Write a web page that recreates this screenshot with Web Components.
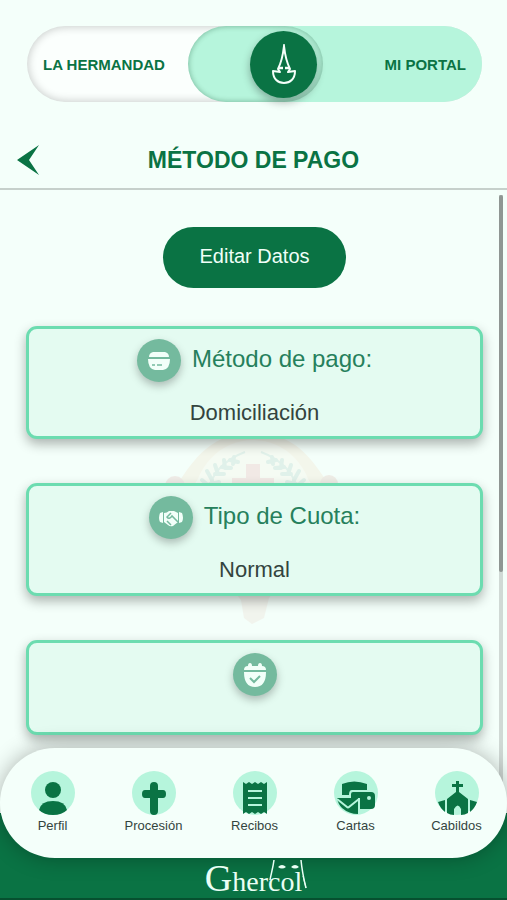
<!DOCTYPE html>
<html lang="es">
<head>
<meta charset="utf-8">
<meta name="viewport" content="width=device-width, initial-scale=1">
<title>Método de pago</title>
<style>
  :root {
    --green: #0a7344; --mint: #b6f5dc; --page: #f4fffa; --line: #6cdcb0; --card: #e4fbf1; --badge: #74ba9e; --ink: #33443e;
  }
  html, body { margin: 0; height: 100%; }
  body { background: var(--page); font-family: "Liberation Sans", Arial, sans-serif; color: var(--ink); }
</style>
</head>
<body>
<portal-app></portal-app>
<script>
const define = (name, html) => {
  const template = document.createElement('template');
  template.innerHTML = '<style>*{box-sizing:border-box}</style>' + html;
  customElements.define(name, class extends HTMLElement {
    constructor() {
      super();
      this.attachShadow({ mode: 'open' }).append(template.content.cloneNode(true));
    }
  });
};

define('portal-switch', `
<style>
  :host { display: block; padding: 26px 25px 0 27px; }
  nav { display: grid; grid-template-columns: 161fr 294fr; height: 76px; border-radius: 38px; background: #fbfffd; box-shadow: inset 0 0 8px 1px rgba(0,0,0,.2); }
  a { color: var(--green); font-size: 15px; font-weight: bold; text-decoration: none; align-self: center; white-space: nowrap; }
  .left { padding-left: 16px; }
  .on { display: flex; justify-content: space-between; border-radius: 38px; background: var(--mint); padding-right: 16px; }
  .well { width: 135px; height: 76px; border-radius: 38px; box-shadow: inset 0 0 5px 1px rgba(0,60,30,.28); display: flex; align-items: center; justify-content: flex-end; padding-right: 6px; }
  button { width: 67px; height: 67px; padding: 0; border: 0; border-radius: 50%; background: var(--green); box-shadow: 0 4px 8px rgba(0,0,0,.3); display: grid; place-items: center; }
</style>
<nav aria-label="Sección">
  <a class="left" href="#hermandad">LA HERMANDAD</a>
  <div class="on">
    <div class="well"><button aria-label="Cambiar sección">
      <svg width="26" height="42" viewBox="0 0 26 42" fill="none" stroke="#f4fffa" stroke-width="2" stroke-linejoin="round">
        <path d="M13 3 C12 12 9 22 7 26 L9 29 L2 28 C2 36 7 40 13 40 C19 40 24 36 24 28 L17 29 L19 26 C17 22 14 12 13 3Z"/>
        <path d="M8 25h4M14 25h4" stroke-width="2.5"/><path d="M13 1v5" stroke-width="1.5"/>
      </svg></button></div>
    <a href="#portal">MI PORTAL</a>
  </div>
</nav>`);

define('page-title', `
<style>
  :host { display: block; margin-top: 29px; border-bottom: 2px solid #c6d0cb; }
  header { display: grid; grid-template-columns: 56px 1fr 56px; align-items: center; height: 57px; }
  button { border: 0; background: none; padding: 0 0 0 16px; height: 57px; display: flex; align-items: center; }
  h1 { margin: 0; font-size: 23px; line-height: 28px; color: var(--green); text-align: center; white-space: nowrap; }
</style>
<header>
  <button aria-label="Volver"><svg width="24" height="32" viewBox="0 0 24 32"><path fill="#0a7344" d="M23 1 L1 16 L23 31 L13 16Z"/></svg></button>
  <h1><slot></slot></h1>
</header>`);

define('pill-button', `
<style>
  :host { display: block; text-align: center; }
  button { height: 61px; padding: 0 36px 3px; border: 0; border-radius: 31px; background: var(--green); color: #f0fff8; font: 20px "Liberation Sans", Arial, sans-serif; }
</style>
<button><slot></slot></button>`);

define('data-card', `
<style>
  :host { display: block; border: 3px solid var(--line); border-radius: 11px; background: var(--card); box-shadow: 0 5px 12px rgba(0,0,0,.3); position: relative; padding: 10px 12px 11px; }
  .head { display: flex; align-items: center; justify-content: center; gap: 11px; color: #26805c; font-size: 24px; line-height: 40px; }
  .badge { width: 44px; height: 43px; border-radius: 50%; background: var(--badge); display: grid; place-items: center; box-shadow: 0 4px 8px rgba(0,0,0,.25); flex: none; }
  ::slotted([slot=title]) { padding-bottom: 3px; }
  ::slotted(p) { margin: 19px 0 0; text-align: center; font-size: 22px; line-height: 24px; }
</style>
<div class="head"><span class="badge"><slot name="icon"></slot></span><slot name="title"></slot></div>
<slot></slot>`);

define('emblem-mark', `
<style>:host{display:block;pointer-events:none} svg{display:block}</style>
<svg width="180" height="196" viewBox="0 0 180 196" fill="none" aria-hidden="true">
  <g opacity=".28">
    <path d="M10 60 C28 36 42 4 90 2 C138 4 152 36 170 60 L156 66 C140 40 125 22 90 20 C55 22 40 40 24 66Z" fill="#f3dfc5"/>
    <ellipse cx="90" cy="74" rx="60" ry="64" fill="#fbf1e2"/>
    <circle cx="12" cy="56" r="10" fill="#e5beb9"/><circle cx="166" cy="54" r="9" fill="#e0c0b4"/>
    <path d="M83 34h14v14h14v16H97v22H83V64H69V48h14Z" fill="#ecb4b0"/>
    <path d="M44 64 Q50 34 82 22 M136 64 Q130 34 98 22" stroke="#b4d3c7" stroke-width="2"/>
    <path d="M46 56l-7-6m10 0l-5-9m11 3l-3-9m10 3l-1-8m9 4l1-7M47 54l9-2m-4-8l9 0m-2-7l9 1m-1-8l8 2M134 56l7-6m-10 0l5-9m-11 3l3-9m-10 3l1-8m-9 4l-1-7M133 54l-9-2m4-8l-9 0m2-7l-9 1m1-8l-8 2" stroke="#b0cfc3" stroke-width="4" stroke-linecap="round"/>
    <path d="M62 150h58l-14 18-5 20-12 6-8-6-3-18Z" fill="#ecd9ce"/>
  </g>
</svg>`);

define('tab-item', `
<style>
  :host { display: block; flex: 1 1 0; min-width: 0; }
  a { display: flex; flex-direction: column; align-items: center; gap: 3px; color: var(--ink); text-decoration: none; font-size: 13px; line-height: 16px; }
  .disc { width: 44px; height: 44px; border-radius: 50%; background: var(--mint); display: grid; place-items: center; }
</style>
<a href="#"><span class="disc"><slot name="icon"></slot></span><span><slot></slot></span></a>`);

define('tab-bar', `
<style>
  :host { display: block; }
  nav { display: flex; height: 110px; padding: 23px 0 0 2px; border-radius: 55px; background: var(--page); box-shadow: 0 0 22px rgba(0,0,0,.3); }
</style>
<nav aria-label="Principal"><slot></slot></nav>`);

define('brand-mark', `
<style>
  :host { display: flex; justify-content: center; height: 42px; border-bottom: 2px solid #06502f; color: #eafff5; font-family: "Liberation Serif", "Times New Roman", serif; }
  .logo { position: relative; line-height: 40px; font-size: 28px; white-space: nowrap; }
  .logo b { font-weight: normal; font-size: 38px; }
  svg { position: absolute; right: -6px; top: 1px; }
</style>
<div class="logo"><b>G</b>hercol<svg width="40" height="34" viewBox="0 0 40 34" fill="none" stroke="#eafff5"><path d="M6 1C5 9 3 15 2 21M33 1C34 12 36 21 38 29" stroke-width="1.5"/><path d="M35 17L38 29"/><path d="M10 8q4-4 8 0q-4 3-8 0ZM23 8q4-4 8 0q-4 3-8 0Z" fill="#eafff5" stroke="none"/></svg></div>`);

define('portal-app', `
<style>
  :host { display: flex; flex-direction: column; height: 100vh; overflow: hidden; }
  main { flex: 1; min-height: 0; display: flex; position: relative; }
  .content { flex: 1; min-width: 0; padding: 37px 16px 0 26px; overflow: hidden; position: relative; }
  .cards { display: flex; flex-direction: column; gap: 44px; margin-top: 38px; }
  .cards data-card:last-child { min-height: 95px; }
  emblem-mark { position: absolute; left: 50%; top: 240px; transform: translateX(-87px); }
  .rail { width: 4px; margin: 5px 4px 0 0; background: #d0d9d5; position: relative; }
  .rail i { display: block; height: 61%; background: #8f9693; border-radius: 2px; }
  footer { background: var(--green); position: relative; }
  tab-bar { margin-top: -65px; }
</style>
<portal-switch></portal-switch>
<page-title>MÉTODO DE PAGO</page-title>
<main>
  <div class="content">
    <emblem-mark></emblem-mark>
    <pill-button>Editar Datos</pill-button>
    <div class="cards">
      <data-card>
        <svg slot="icon" width="24" height="20" viewBox="0 0 24 20" fill="#f2fff9"><path d="M6 1h12q4 1 4 5H2q0-4 4-5ZM1 8h22q0 10-7 11H8Q1 18 1 8Z"/><path d="M5 14h3m2 0h5" stroke="#74ba9e" stroke-width="1.5"/></svg>
        <span slot="title">Método de pago:</span><p>Domiciliación</p>
      </data-card>
      <data-card>
        <svg slot="icon" width="24" height="18" viewBox="0 0 24 18" fill="#f2fff9"><path d="M1 4l3-1v11l-3-1q-2-4 0-9ZM23 4l-3-1v11l3-1q2-4 0-9Z"/><path d="M5 4q3 0 5-2h5l4 2v9l-5 4q-3 1-5-1l-4-3Z"/><path d="M12 4L8 8q2 3 5-1l6 6M8 12l4 4" fill="none" stroke="#74ba9e" stroke-width="1.5"/></svg>
        <span slot="title">Tipo de Cuota:</span><p>Normal</p>
      </data-card>
      <data-card>
        <svg slot="icon" width="24" height="26" viewBox="0 0 24 26" fill="#f2fff9"><path d="M1 8q0-4 4-4 0-3 2-3t2 3h6q0-3 2-3t2 3q4 0 4 4ZM1 10h22q0 15-11 15T1 10Z"/><path d="M7 16l4 4 6-6" fill="none" stroke="#74ba9e" stroke-width="2"/></svg>
      </data-card>
    </div>
  </div>
  <div class="rail" aria-hidden="true"><i></i></div>
</main>
<footer>
  <tab-bar>
    <tab-item><svg slot="icon" width="44" height="44" viewBox="0 0 44 44" fill="#0a7344"><circle cx="22" cy="19" r="8"/><path d="M8 39q2-9 14-9t14 9q-5 5-14 5T8 39Z"/></svg>Perfil</tab-item>
    <tab-item><svg slot="icon" width="44" height="44" viewBox="0 0 44 44" fill="#0a7344"><path d="M22 11q4 0 4 4v4h5q3 0 3 4t-3 4h-5v13q0 4-4 4t-4-4V27h-5q-3 0-3-4t3-4h5v-4q0-4 4-4Z"/></svg>Procesión</tab-item>
    <tab-item><svg slot="icon" width="44" height="44" viewBox="0 0 44 44"><path fill="#0a7344" d="M10 11l3 2 3-2 3 2 3-2 3 2 3-2 3 2 3-2v32l-3-2-3 2-3-2-3 2-3-2-3 2-3-2-3 2Z"/><path d="M15 20h14M15 27h14M15 34h14" stroke="#b6f5dc" stroke-width="2"/></svg>Recibos</tab-item>
    <tab-item><svg slot="icon" width="44" height="44" viewBox="0 0 44 44" fill="#0a7344"><path d="M8 24V13q12-5 25 0v6H18q-3 0-3 5Z"/><path d="M19 21h18q4 0 4 4v9q0 4-4 4H26V27h-9v-4q0-2 2-2Z"/><circle cx="35" cy="27" r="2" fill="#b6f5dc"/><path d="M3 27h21v16q-9 0-16-6-4-4-5-10Z"/><path d="M3 28l10 8q1 1 2 0l10-8" stroke="#b6f5dc" stroke-width="2" fill="none"/></svg>Cartas</tab-item>
    <tab-item><svg slot="icon" width="44" height="44" viewBox="0 0 44 44" fill="#0a7344"><path d="M21 10h3v3h4v3h-4v5l9 7v14q-3 2-7 2v-6q-3-7-7 0v6q-4 0-7-2V28l9-7v-5h-4v-3h4ZM10 29v12q-5-4-7-10ZM35 29v12q5-4 7-10Z"/></svg>Cabildos</tab-item>
  </tab-bar>
  <brand-mark></brand-mark>
</footer>`);
</script>
</body>
</html>
